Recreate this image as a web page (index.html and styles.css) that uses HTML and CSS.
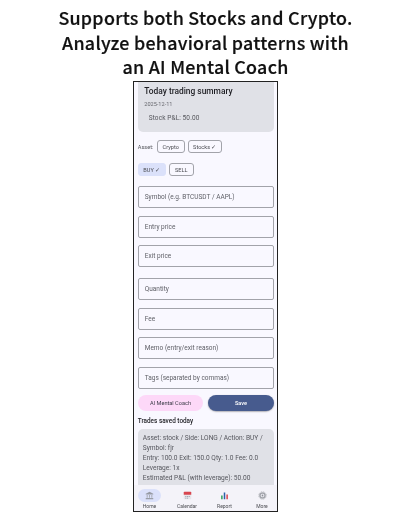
FILE: index.html
```html
<!DOCTYPE html>
<html lang="en">
<head>
<meta charset="utf-8">
<title>Trading summary</title>
<link rel="stylesheet" href="styles.css">
</head>
<body>
<h1 class="headline">Supports both Stocks and Crypto.<br>Analyze behavioral patterns with<br>an AI Mental Coach</h1>
<div class="phone">
  <main class="screen">
    <section class="summary">
      <h2 class="summary-title">Today trading summary</h2>
      <div class="summary-date">2025-12-11</div>
      <div class="summary-pnl">Stock P&amp;L: 50.00</div>
    </section>
    <div class="asset-row">
      <span class="asset-label">Asset:</span>
      <span class="chip chip-crypto">Crypto</span>
      <span class="chip chip-stocks">Stocks ✓</span>
    </div>
    <div class="side-row">
      <span class="chip chip-buy">BUY ✓</span>
      <span class="chip chip-sell">SELL</span>
    </div>
    <div class="fields">
      <div class="field">Symbol (e.g. BTCUSDT / AAPL)</div>
      <div class="field">Entry price</div>
      <div class="field">Exit price</div>
      <div class="field field-gap">Quantity</div>
      <div class="field">Fee</div>
      <div class="field">Memo (entry/exit reason)</div>
      <div class="field">Tags (separated by commas)</div>
    </div>
    <div class="actions">
      <div class="btn btn-coach">AI Mental Coach</div>
      <div class="btn btn-save">Save</div>
    </div>
    <h3 class="saved-title">Trades saved today</h3>
    <section class="trade">
      Asset: stock / Side: LONG / Action: BUY /<br>Symbol: fjr<br>Entry: 100.0 Exit: 150.0 Qty: 1.0 Fee: 0.0<br>Leverage: 1x<br>Estimated P&amp;L (with leverage): 50.00
    </section>
  </main>
  <nav class="nav">
    <div class="nav-item">
      <span class="pill pill-active">
        <svg class="icon" viewBox="0 0 12 12"><path fill="#969aa3" d="M6 1 11 3.6V4.6H1V3.6Z"/><path fill="#aaadb5" d="M2.2 5.2H3.6V9H2.2ZM5.3 5.2H6.7V9H5.3ZM8.4 5.2H9.8V9H8.4Z"/><path fill="#969aa3" d="M1 9.4H11V11H1Z"/></svg>
      </span>
      <span class="nav-label">Home</span>
    </div>
    <div class="nav-item">
      <span class="pill">
        <svg class="icon" viewBox="0 0 12 12"><rect x="1" y="1" width="10" height="10" rx="1" fill="#e6e6ea"/><path fill="#d8454f" d="M1 2a1 1 0 0 1 1-1h8a1 1 0 0 1 1 1v3H1Z"/><path fill="#8d93a3" d="M3 7h1.5v1H3ZM5.3 7h1.5v1H5.3ZM7.6 7h1.5v1H7.6ZM3 9h1.5v1H3ZM5.3 9h1.5v1H5.3Z"/></svg>
      </span>
      <span class="nav-label">Calendar</span>
    </div>
    <div class="nav-item">
      <span class="pill">
        <svg class="icon" viewBox="0 0 12 12"><path fill="#2f9e5b" d="M1.5 6H3.5V11H1.5Z"/><path fill="#2c5fa8" d="M5 2H7V11H5Z"/><path fill="#d8454f" d="M8.5 4.5H10.5V11H8.5Z"/></svg>
      </span>
      <span class="nav-label">Report</span>
    </div>
    <div class="nav-item">
      <span class="pill">
        <svg class="icon" viewBox="0 0 12 12"><circle cx="6" cy="6" r="3.4" fill="none" stroke="#a4a6ad" stroke-width="2"/><circle cx="6" cy="6" r="5" fill="none" stroke="#b2b4ba" stroke-width="1.2" stroke-dasharray="1.4 1.2"/><circle cx="6" cy="6" r="1.2" fill="#8f9198"/></svg>
      </span>
      <span class="nav-label">More</span>
    </div>
  </nav>
</div>
</body>
</html>
```
FILE: styles.css
```css
* { box-sizing: border-box; }
html, body { margin: 0; padding: 0; }
body {
  width: 410px;
  height: 512px;
  overflow: hidden;
  background: #fff;
  font-family: Roboto, "Liberation Sans", sans-serif;
  display: flex;
  flex-direction: column;
  align-items: center;
}
.headline {
  margin: 5px 0 0 1px;
  height: 76px;
  font-family: "Noto Sans CJK JP", "Noto Sans", sans-serif;
  font-weight: 500;
  font-size: 17.9px;
  line-height: 24.5px;
  letter-spacing: 0.25px;
  text-align: center;
  color: #111;
  white-space: nowrap;
  -webkit-text-stroke: 0.2px #111;
  filter: blur(0.3px);
}
.phone {
  width: 145px;
  height: 431px;
  margin-left: 1.5px;
  border: 1.5px solid #222;
  border-bottom-width: 1px;
  background: #f9f8ff;
  display: flex;
  flex-direction: column;
  overflow: hidden;
  filter: blur(0.35px);
}
.screen {
  flex: 1;
  min-height: 0;
  overflow: hidden;
  padding: 0 3.5px;
}
.summary {
  height: 50px;
  background: #e0e1e7;
  border-radius: 0 0 5px 5px;
  padding: 2.5px 6.5px 0;
}
.summary-title {
  margin: 0;
  font-size: 8.4px;
  line-height: 12px;
  font-weight: 500;
  color: #1d1d22;
  white-space: nowrap;
}
.summary-date {
  margin-top: 3px;
  font-size: 5.6px;
  line-height: 8px;
  color: #66676d;
}
.summary-pnl {
  margin: 6px 0 0 4.5px;
  font-size: 6.5px;
  line-height: 9px;
  letter-spacing: 0.1px;
  color: #55565c;
}
.asset-row, .side-row {
  display: flex;
  align-items: center;
  height: 13px;
}
.asset-row { margin-top: 8px; }
.side-row { margin-top: 10px; }
.asset-label {
  width: 19px;
  font-size: 5.6px;
  color: #55565c;
}
.chip {
  height: 13px;
  border: 0.7px solid #a2a3aa;
  border-radius: 3px;
  display: flex;
  align-items: center;
  justify-content: center;
  font-size: 5.6px;
  color: #4a4b51;
  white-space: nowrap;
}
.chip-crypto { width: 28px; margin-right: 3px; }
.chip-stocks { width: 34px; }
.chip-buy {
  width: 28px;
  margin-right: 3px;
  background: #dbe1fa;
  border-color: #dbe1fa;
}
.chip-sell { width: 25px; }
.fields {
  margin-top: 10px;
  display: flex;
  flex-direction: column;
  gap: 7.5px;
}
.field {
  height: 22px;
  border: 0.8px solid #a2a3aa;
  border-radius: 2px;
  padding-left: 6px;
  display: flex;
  align-items: center;
  font-size: 6.5px;
  color: #606168;
  white-space: nowrap;
}
.field-gap { margin-top: 3.5px; }
.actions {
  margin-top: 6px;
  display: flex;
  gap: 5px;
}
.btn {
  flex: 1;
  height: 16px;
  border-radius: 8px;
  display: flex;
  align-items: center;
  justify-content: center;
  font-size: 5.6px;
}
.btn-coach { background: #fdd8f8; color: #3c3c48; }
.btn-save {
  background: #475b8e;
  color: #fff;
  font-weight: 500;
  box-shadow: 0 0.7px 1.5px rgba(0, 0, 0, 0.35);
}
.saved-title {
  margin: 6px 0 0;
  font-size: 6.4px;
  line-height: 9px;
  font-weight: 500;
  color: #1d1d22;
}
.trade {
  margin-top: 3px;
  height: 72px;
  background: #e0e1e7;
  border-radius: 5px 5px 0 0;
  padding: 4.5px 5px 0;
  font-size: 6.6px;
  line-height: 10.1px;
  color: #55565d;
  white-space: nowrap;
}
.nav {
  flex: none;
  height: 26.5px;
  background: #f4f3f9;
  display: grid;
  grid-template-columns: repeat(4, 23px);
  column-gap: 14.5px;
  justify-content: center;
  padding: 4px 0 0;
}
.nav-item {
  display: flex;
  flex-direction: column;
  align-items: center;
}
.pill {
  width: 23px;
  height: 13px;
  border-radius: 7px;
  display: flex;
  align-items: center;
  justify-content: center;
}
.pill-active { background: #dbe1fa; }
.icon { width: 9px; height: 9px; }
.nav-label {
  margin-top: 1px;
  font-size: 5px;
  line-height: 7px;
  color: #4a4b51;
  white-space: nowrap;
}
```
